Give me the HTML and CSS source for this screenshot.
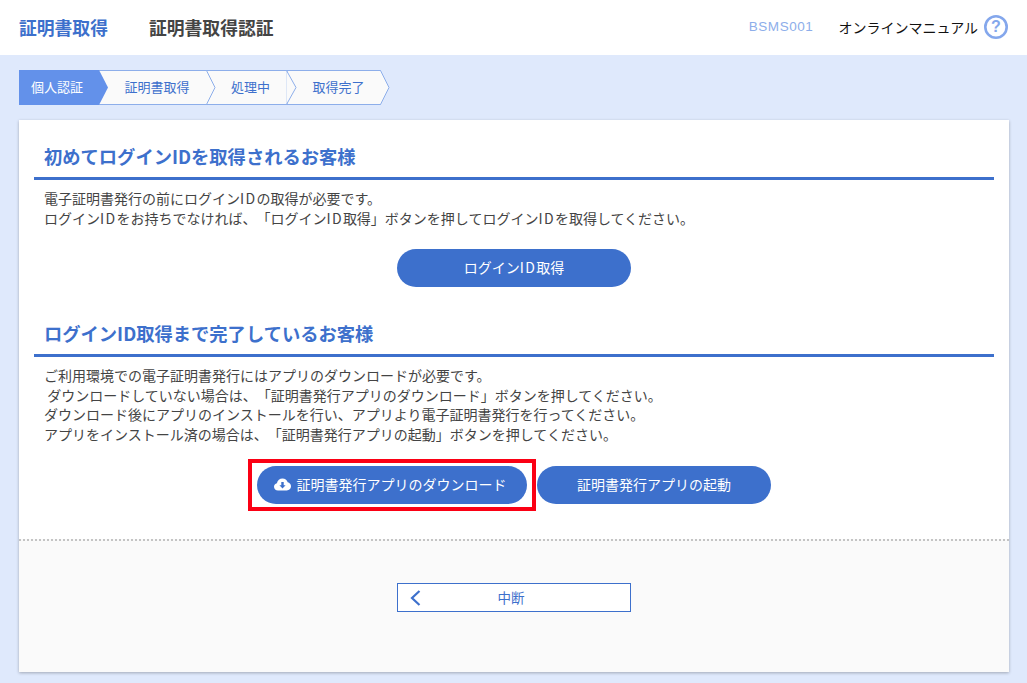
FILE: index.html
```html
<!DOCTYPE html>
<html lang="ja">
<head>
<meta charset="utf-8">
<title>証明書取得認証</title>
<link rel="stylesheet" href="styles.css">
</head>
<body>
<header class="topbar">
  <div class="topbar-title">証明書取得</div>
  <div class="topbar-sub">証明書取得認証</div>
  <div class="topbar-code">BSMS001</div>
  <div class="topbar-manual">オンラインマニュアル</div>
  <svg class="help-icon" width="26" height="26" viewBox="0 0 26 26"><circle cx="13" cy="13" r="10.7" fill="#fff" stroke="#84a7ec" stroke-width="2.6"/><text x="13" y="18.4" text-anchor="middle" class="help-q">?</text></svg>
</header>
<nav class="steps">
  <svg class="steps-art" width="371" height="35" viewBox="0 0 371 35">
    <path d="M.5.5H187.5L196 17.5L187.500 34.500H.5Z" fill="#fafafa"/>
    <path d="M80 .5H277.500L286 17.500L277.500 34.500H80" fill="#fafafa"/>
    <path d="M268 .5H361.500L370 17.500L361.500 34.500H268Z" fill="#fafafa" stroke="#8daeea"/>
    <path d="M.5.500H361.500M.5 34.500H361.500" stroke="#8daeea" fill="none"/>
    <path d="M187.500.5L196 17.500L187.500 34.500M267.500.5L277 17.500L267.500 34.500" stroke="#8daeea" fill="#fafafa"/>
    <path d="M0 0H80L89 17.500L80 35H0Z" fill="#6391ea"/>
  </svg>
  <span class="step step-active">個人認証</span>
  <span class="step step-two">証明書取得</span>
  <span class="step step-three">処理中</span>
  <span class="step step-four">取得完了</span>
</nav>
<main class="card">
  <div class="card-main">
    <section class="block">
      <h2 class="block-title">初めてログインIDを取得されるお客様</h2>
      <p class="block-text">電子証明書発行の前にログイン<span class="latin">ID</span>の取得が必要です。<br>ログイン<span class="latin">ID</span>をお持ちでなければ、「ログイン<span class="latin">ID</span>取得」ボタンを押してログイン<span class="latin">ID</span>を取得してください。</p>
      <div class="actions"><button class="pill pill-md">ログイン<span class="latin">ID</span>取得</button></div>
    </section>
    <section class="block block-second">
      <h2 class="block-title">ログインID取得まで完了しているお客様</h2>
      <p class="block-text">ご利用環境での電子証明書発行にはアプリのダウンロードが必要です。<br>&nbsp;ダウンロードしていない場合は、「証明書発行アプリのダウンロード」ボタンを押してください。<br>ダウンロード後にアプリのインストールを行い、アプリより電子証明書発行を行ってください。<br>アプリをインストール済の場合は、「証明書発行アプリの起動」ボタンを押してください。</p>
      <div class="actions">
        <button class="pill pill-md pill-lg">
          <svg class="cloud" width="17" height="13" viewBox="0 0 17 13"><path d="M4 12.500C1.800 12.500 0 10.900 0 8.800C0 7 1.200 5.600 2.900 5.200C3.500 2.600 5.700.5 8.500.5C11 .5 13 2 13.700 4.300C15.600 4.700 17 6.300 17 8.300C17 10.600 15.100 12.500 12.800 12.500Z" fill="#fff"/><path d="M7.300 4H9.700V7.300H11.600L8.500 10.600L5.400 7.300H7.300Z" fill="#3d70cc"/></svg>
          証明書発行アプリのダウンロード
          <span class="highlight"></span>
        </button>
        <button class="pill pill-md">証明書発行アプリの起動</button>
      </div>
    </section>
  </div>
  <div class="card-foot">
    <button class="back">
      <svg class="back-arrow" width="11" height="16" viewBox="0 0 11 16"><path d="M9.500 1L2 8L9.500 15" fill="none" stroke="#3d70cc" stroke-width="2.200"/></svg>
      中断
    </button>
  </div>
</main>
</body>
</html>
```

FILE: styles.css
```css
* { box-sizing: border-box; }
html, body { margin: 0; padding: 0; }
body {
  width: 1027px;
  height: 683px;
  overflow: hidden;
  background: #dfe9fc;
  color: #444;
  font-family: "Noto Sans CJK JP", "Noto Sans", sans-serif;
  font-size: 14px;
  text-spacing-trim: space-all;
  font-feature-settings: "chws" 0;
}
.latin { letter-spacing: 1.350px; }
.topbar {
  display: flex;
  align-items: center;
  height: 55px;
  background: #fff;
  padding: 0 18px 2px 19px;
}
.topbar-title { font-size: 17.800px; font-weight: 700; color: #3d70cc; width: 130px; }
.topbar-sub { font-size: 17.800px; font-weight: 700; color: #444; }
.topbar-code { margin-left: auto; font-family: "Liberation Sans", sans-serif; font-size: 13.500px; color: #8daeea; letter-spacing: .55px; }
.topbar-manual { margin-left: 25px; font-size: 14px; color: #111; }
.help-icon { margin-left: 5px; flex: none; }
.help-q { font: 700 16px "Liberation Sans", sans-serif; fill: #84a7ec; }
.steps {
  position: relative;
  display: flex;
  width: 371px;
  height: 35px;
  margin: 15px 0 15px 19px;
  color: #3d70cc;
  font-size: 13px;
}
.steps-art { position: absolute; inset: 0; }
.step { position: relative; display: flex; align-items: center; justify-content: center; height: 35px; padding-bottom: 2px; }
.step-active { width: 76px; color: #fff; }
.step-two { width: 112px; padding-left: 12px; }
.step-three { width: 81px; padding-left: 6px; }
.step-four { width: 80px; padding-left: 21px; }
.card {
  width: 990px;
  height: 552px;
  margin-left: 19px;
  background: #fff;
  box-shadow: 0 1px 3px rgba(0,0,0,.28);
  display: flex;
  flex-direction: column;
}
.card-main { height: 419px; padding: 22px 15px 0; }
.block-second { margin-top: 32px; }
.block-title {
  margin: 0;
  height: 38px;
  padding: 1px 10px 0;
  border-bottom: 3px solid #3d70cc;
  font-size: 18.300px;
  line-height: 26px;
  font-weight: 700;
  color: #3d70cc;
}
.block-text { margin: 9px 0 0; padding: 0 10px; line-height: 19.600px; color: #444; }
.actions { display: flex; justify-content: center; gap: 10px; margin-top: 21px; }
.pill {
  position: relative;
  display: flex;
  align-items: center;
  justify-content: center;
  height: 38px;
  padding: 0 0 2px;
  border: 0;
  border-radius: 19px;
  background: #3d70cc;
  color: #fff;
  font: inherit;
  font-size: 14px;
}
.pill-md { width: 234px; }
.pill-lg { width: 270px; padding-right: 4px; }
.cloud { margin-right: 6px; margin-top: 2px; }
.highlight {
  position: absolute;
  inset: -7px -9px;
  border: 4px solid #fb0014;
  pointer-events: none;
}
.card-foot {
  flex: 1;
  border-top: 2px dotted #c4c4c4;
  background: #fafafa;
  padding-top: 42px;
}
.back {
  position: relative;
  display: block;
  width: 234px;
  height: 29px;
  margin: 0 auto;
  padding: 0 6px 2px 0;
  border: 1px solid #3d70cc;
  background: #fff;
  color: #3d70cc;
  font: inherit;
  font-size: 13.500px;
}
.back-arrow { position: absolute; left: 12px; top: 6px; }
```
